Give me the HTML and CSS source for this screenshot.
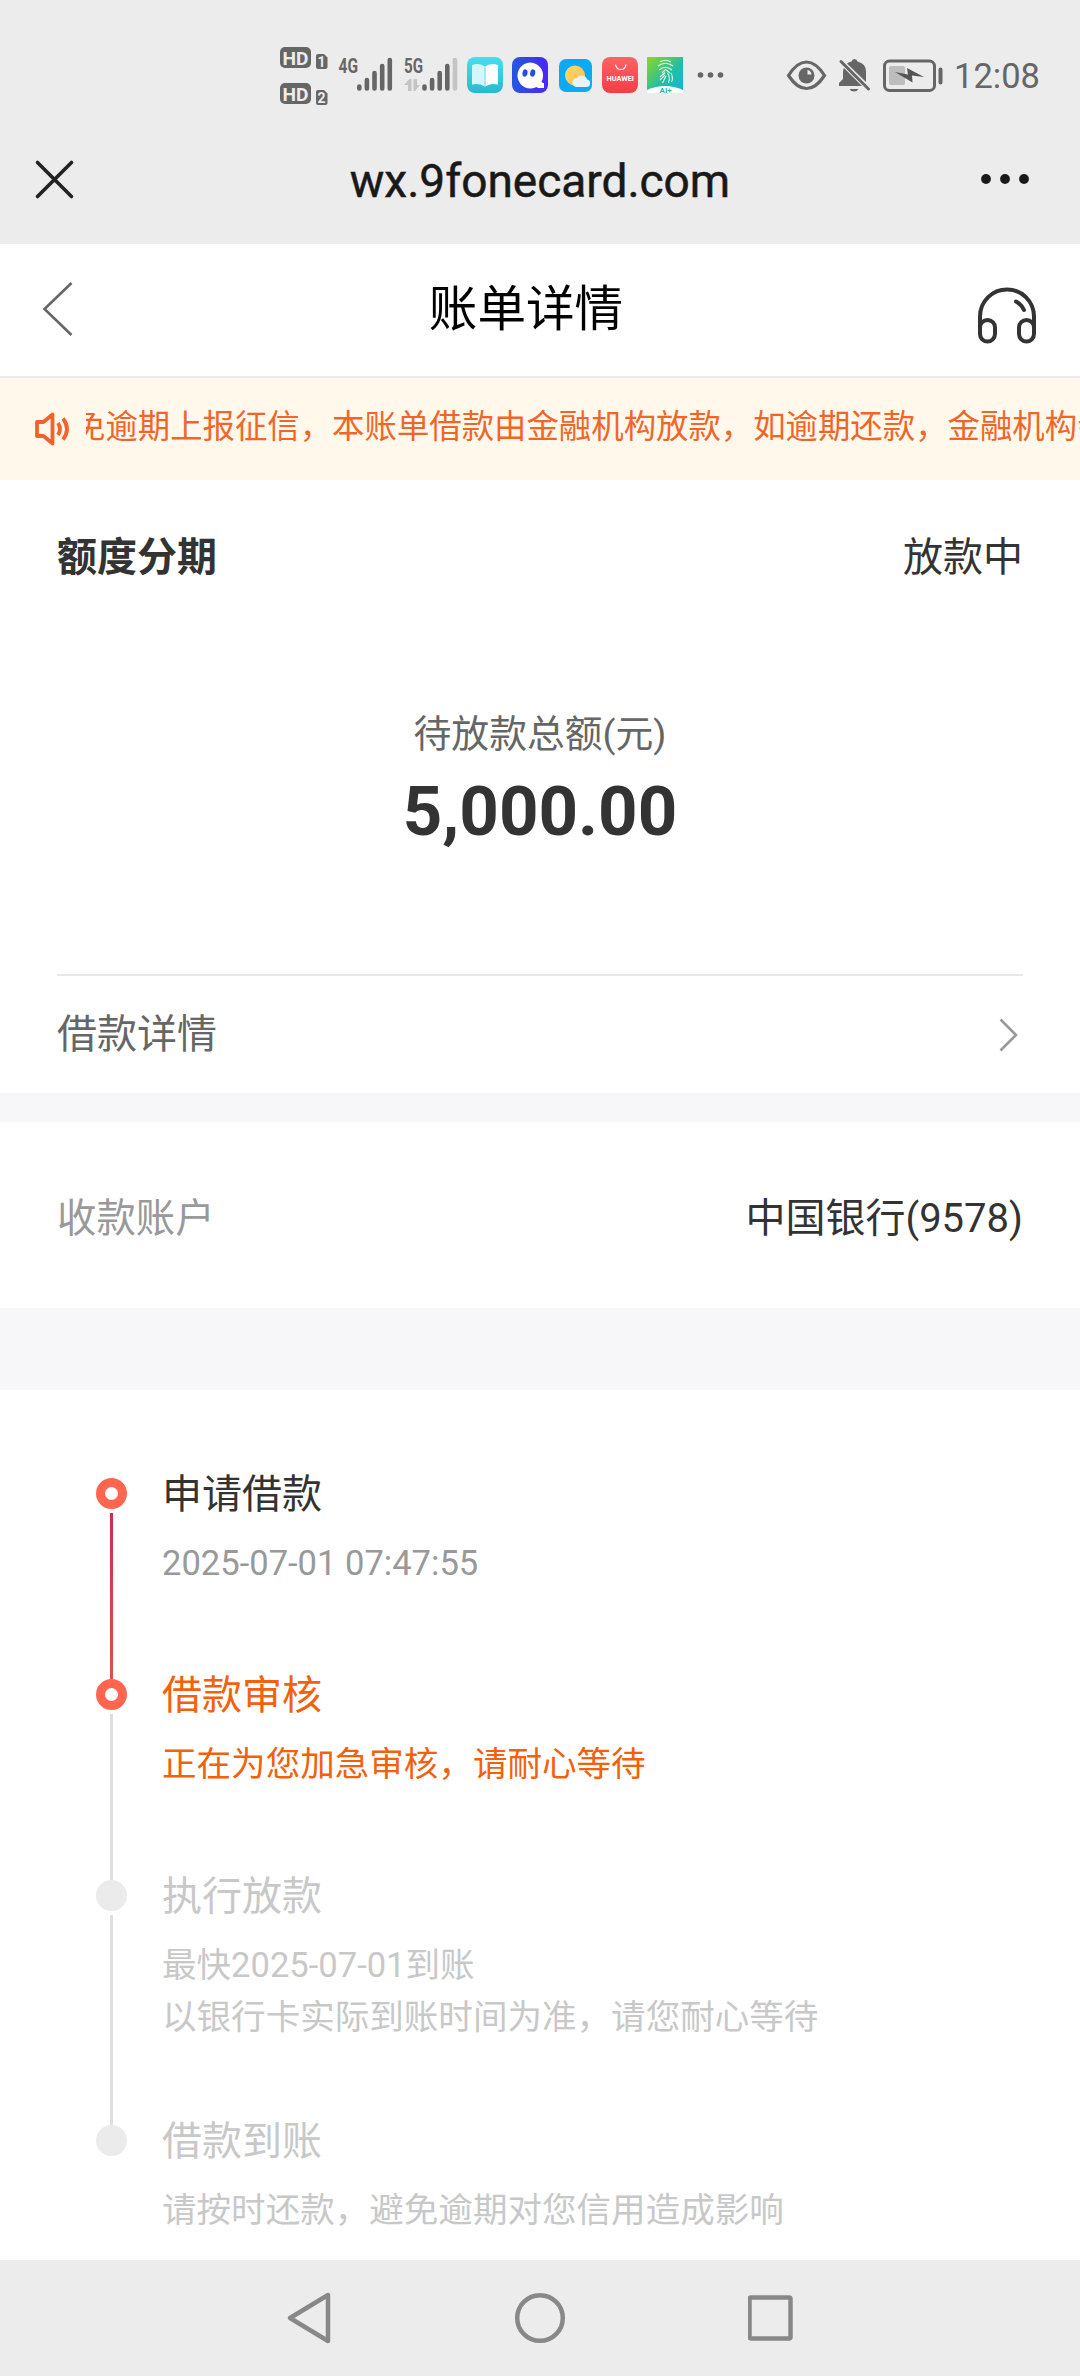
FILE: index.html
```html
<!DOCTYPE html>
<html lang="zh-CN">
<head>
<meta charset="utf-8">
<title>账单详情</title>
<link rel="stylesheet" href="styles.css">
</head>
<body>
<div class="status">
  <svg class="signals" width="180" height="64" viewBox="278 43 180 64">
    <g fill="#666">
      <rect x="280" y="47" width="31" height="21" rx="5"/>
      <rect x="280" y="83" width="31" height="21" rx="5"/>
      <path d="M318 54h6l3.500 3.500V67a2 2 0 0 1-2 2h-7.500a2 2 0 0 1-2-2V56a2 2 0 0 1 2-2z"/>
      <path d="M318 90h6l3.500 3.500V103a2 2 0 0 1-2 2h-7.500a2 2 0 0 1-2-2V92a2 2 0 0 1 2-2z"/>
    </g>
    <g class="tag">
      <text x="282.500" y="64.500" font-size="19" textLength="26" lengthAdjust="spacingAndGlyphs">HD</text>
      <text x="282.500" y="100.500" font-size="19" textLength="26" lengthAdjust="spacingAndGlyphs">HD</text>
      <text x="317.500" y="67" font-size="14">1</text>
      <text x="317.500" y="103" font-size="14">2</text>
    </g>
    <g class="net">
      <text x="338.500" y="73" font-size="21" textLength="19.500" lengthAdjust="spacingAndGlyphs">4G</text>
      <text x="404" y="73" font-size="21" textLength="19" lengthAdjust="spacingAndGlyphs">5G</text>
    </g>
    <g stroke="#666" stroke-width="4.600" stroke-linecap="round">
      <path d="M359.300 86.500v2M366.900 80v8.500M374.500 73v15.500M382.200 66v22.500M389.800 60v28.500"/>
      <path d="M424.500 86.500v2M432.100 80v8.500M439.700 73v15.500M447.300 66v22.500"/>
      <path stroke="#c4c4c4" d="M455 60v28.500"/>
    </g>
    <path d="M404 85l5.500-6h2v12h-3.500v-6zM413.500 79h3.500v6h3l-5 6h-1.500z" fill="#c4c4c4"/>
  </svg>
  <svg class="apps" width="264" height="40" viewBox="465 55 264 40">
    <defs>
      <linearGradient id="book" x2="0" y2="1"><stop stop-color="#43e0f0"/><stop offset="1" stop-color="#2bb8cc"/></linearGradient>
      <linearGradient id="chat" x2="1" y2="0"><stop stop-color="#2457e0"/><stop offset="1" stop-color="#4a26f5"/></linearGradient>
      <linearGradient id="market" x2="0" y2="1"><stop stop-color="#ff6361"/><stop offset="1" stop-color="#f23d49"/></linearGradient>
      <linearGradient id="touch" x2="1" y2="1"><stop stop-color="#8ed91c"/><stop offset=".55" stop-color="#22bfa4"/><stop offset="1" stop-color="#13b4dc"/></linearGradient>
      <linearGradient id="sun" x2="1" y2="1"><stop stop-color="#ffd873"/><stop offset="1" stop-color="#ffbf45"/></linearGradient>
    </defs>
    <rect x="467" y="57" width="36" height="36" rx="8" fill="url(#book)"/>
    <path d="M472 65q7-2.500 12 1v20q-5-3-12-1.500z" fill="#d5f7fb"/>
    <path d="M486 66q5-3.500 12-1v19.500q-7-1.500-12 1.500z" fill="#fff"/>
    <path d="M484 66l2 0v20l-1 1-1-1z" fill="#a9e8f0"/>
    <rect x="512" y="57" width="36" height="36" rx="8" fill="url(#chat)"/>
    <path d="M530 62.500a13 13 0 0 1 11.500 19.200l1.500 1.300h1v5h-6l-1.500-1A13 13 0 1 1 530 62.500z" fill="#fff"/>
    <ellipse cx="525" cy="73" rx="2.500" ry="3.700" transform="rotate(12 525 73)" fill="#274be4"/>
    <ellipse cx="532.700" cy="73" rx="2.500" ry="3.700" transform="rotate(12 532.700 73)" fill="#274be4"/>
    <rect x="559" y="59" width="33" height="33" rx="7" fill="#0aaaf5"/>
    <circle cx="575" cy="75.500" r="10" fill="url(#sun)"/>
    <path d="M577 87a4.500 4.500 0 0 1-.3-9 6 6 0 0 1 10.500 1.500 3.800 3.800 0 0 1-1 7.500z" fill="#e9f2f7"/>
    <rect x="602" y="57" width="36" height="36" rx="8" fill="url(#market)"/>
    <path d="M615.500 64.500q.8 5 5.300 5t5.200-5" fill="none" stroke="#fff" stroke-width="1.200"/>
    <text class="brand" x="606.500" y="80.500" font-size="7" textLength="27.500" lengthAdjust="spacingAndGlyphs">HUAWEI</text>
    <path d="M647 57h36v36h-36z" fill="url(#touch)"/>
    <path d="M647 93v-3q18-8 36 0v3z" fill="#fff"/>
    <text class="ai" x="659.500" y="93" font-size="8">AI+</text>
    <g fill="none" stroke="#e4fae6" stroke-width="1.100">
      <path d="M660 62q5.500-3.500 11 0M658 66q7.500-5.500 15 0M659 70q6.500-5.500 13 0M662 73l3.500-3.500 4.500 3.500M660 77l5-4.500M660 80l5-5M662.500 83l3.500-7M667.500 73q3 4 1 10M671 73q2.500 5 .5 9"/>
    </g>
    <g fill="#666"><circle cx="700.500" cy="75" r="2.800"/><circle cx="710.500" cy="75" r="2.800"/><circle cx="720.500" cy="75" r="2.800"/></g>
  </svg>
  <svg class="state" width="160" height="40" viewBox="785 55 160 40">
    <path d="M788.500 75.500Q797 62 806.500 62t18 13.500Q816 88.500 806.500 88.500t-18-13z" fill="none" stroke="#666" stroke-width="3.200"/>
    <circle cx="806.500" cy="75.500" r="8" fill="#666"/>
    <path d="M807.500 74.500v-4.500a5 5 0 0 1 4 4.500z" fill="#ececec"/>
    <path d="M844 68l18 18h-23v-3l4-4v-7q0-2.500 1-4zM847 63.500q2-1.500 4.500-2 .5-2.500 3-2.500t3 2.500q8.500 2 8.500 10v10.500zM849.500 89h9q-1.500 2.500-4.500 2.500t-4.500-2.500z" fill="#666"/>
    <path d="M841 61.500l27.500 27.500" stroke="#666" stroke-width="3" stroke-linecap="round"/>
    <rect x="884.500" y="61" width="50" height="29.500" rx="5" fill="none" stroke="#666" stroke-width="3"/>
    <rect x="889" y="66" width="16" height="19" rx="2" fill="#bdbdbd"/>
    <path d="M895 72l13 2.500-1-6.500 17 9-12-1.500.5 7z" fill="#555"/>
    <rect x="938.500" y="67.500" width="4" height="17" rx="2" fill="#666"/>
  </svg>
  <span class="clock">12:08</span>
</div>

<div class="bar browser">
  <svg width="41" height="41" viewBox="0 0 41 41"><path d="M3.500 3.500l34 34M37.500 3.500l-34 34" stroke="#222" stroke-width="3.600" stroke-linecap="round"/></svg>
  <span class="domain">wx.9fonecard.com</span>
  <svg width="50" height="12" viewBox="0 0 50 12" fill="#191919"><circle cx="6" cy="6" r="4.900"/><circle cx="25" cy="6" r="4.900"/><circle cx="44" cy="6" r="4.900"/></svg>
</div>

<div class="bar header">
  <svg width="31" height="56" viewBox="0 0 31 56"><path d="M29.500 2L2.500 28l27 26" fill="none" stroke="#666" stroke-width="2.600"/></svg>
  <span class="title">账单详情</span>
  <svg class="headset" width="60" height="58" viewBox="0 0 60 58" fill="none" stroke="#333" stroke-width="4">
    <path d="M3 42V30.500a27 27 0 0 1 54 0V42" />
    <rect x="3" y="34" width="15" height="21.500" rx="7.500"/>
    <rect x="42" y="34" width="15" height="21.500" rx="7.500"/>
    <path d="M39 15.500q5.500 3 8 8.500" stroke-linecap="round"/>
  </svg>
</div>

<div class="notice">
  <svg width="37" height="38" viewBox="0 0 37 38" fill="none" stroke="#f2622a" stroke-width="3.800">
    <path d="M4 12h6.500L19.500 4.500v29L10.500 26H4z" stroke-linejoin="round"/>
    <path d="M25 13q4 6 0 12M30 8.500q8 10.500 0 21"/>
  </svg>
  <div class="marquee"><span>免逾期上报征信，本账单借款由金融机构放款，如逾期还款，金融机构会</span></div>
</div>

<div class="summary">
  <div class="row top"><b>额度分期</b><span>放款中</span></div>
  <div class="amount">
    <div class="caption">待放款总额(元)</div>
    <div class="total">5,000.00</div>
  </div>
  <div class="row detail">
    <span>借款详情</span>
    <svg width="20" height="34" viewBox="0 0 20 34"><path d="M1.500 1.500L17 17 1.500 32.500" fill="none" stroke="#999" stroke-width="2.600"/></svg>
  </div>
</div>

<div class="row account"><span class="label">收款账户</span><span>中国银行(9578)</span></div>

<div class="steps">
  <div class="step done">
    <div class="rail"><i class="dot"></i><i class="line"></i></div>
    <div class="body"><div class="name">申请借款</div><div class="note">2025-07-01 07:47:55</div></div>
  </div>
  <div class="step current">
    <div class="rail"><i class="dot"></i><i class="line"></i></div>
    <div class="body"><div class="name">借款审核</div><div class="note">正在为您加急审核，请耐心等待</div></div>
  </div>
  <div class="step tall">
    <div class="rail"><i class="dot"></i><i class="line"></i></div>
    <div class="body"><div class="name">执行放款</div><div class="note">最快2025-07-01到账<br>以银行卡实际到账时间为准，请您耐心等待</div></div>
  </div>
  <div class="step last">
    <div class="rail"><i class="dot"></i></div>
    <div class="body"><div class="name">借款到账</div><div class="note">请按时还款，避免逾期对您信用造成影响</div></div>
  </div>
</div>

<div class="nav">
  <svg width="46" height="54" viewBox="0 0 46 54"><path d="M42 4v46L4 27z"/></svg>
  <svg width="54" height="54" viewBox="0 0 54 54"><circle cx="27" cy="27" r="22.800"/></svg>
  <svg width="46" height="54" viewBox="0 0 46 54"><rect x="1.500" y="6.500" width="41" height="41" rx="1.500"/></svg>
</div>
</body>
</html>
```
FILE: styles.css
```css
* { box-sizing: border-box; }

body {
  margin: 0;
  width: 1080px;
  height: 2376px;
  overflow: hidden;
  display: flex;
  flex-direction: column;
  background: #f7f7fa;
  color: #333;
  font-family: Roboto, "Noto Sans CJK SC", sans-serif;
  font-size: 40px;
}

body > div { flex: none; }
svg { display: block; flex: none; }

.status {
  display: flex;
  align-items: center;
  height: 118px;
  padding: 32px 0 0 278px;
  background: #ececec;
}
.apps { margin-left: 7px; }
.state { margin-left: 56px; }
.tag { fill: #ececec; font-weight: 700; }
.net { fill: #666; font-weight: 700; }
.brand { fill: #fff; font-weight: 700; }
.ai { fill: #26b5b0; font-weight: 700; }
.clock { padding-top: 2px; margin-left: 9px; font-size: 34.500px; line-height: 40px; color: #666; }

.bar {
  display: grid;
  grid-template-columns: 1fr auto 1fr;
  align-items: center;
}
.bar > :last-child { justify-self: end; }

.browser {
  height: 126px;
  padding: 0 50px 4px 34px;
  background: #ececec;
}
.domain {
  padding-top: 3px;
  margin-left: 16px;
  font-size: 46px;
  line-height: 60px;
  color: #191919;
  -webkit-text-stroke: .5px #191919;
}

.header {
  height: 134px;
  padding: 0 43px 2px 42px;
  background: #fff;
  border-bottom: 2px solid #ebebeb;
}
.title { padding-top: 2px; margin-right: 27px; font-size: 48.600px; line-height: 60px; color: #000; }
.headset { margin-top: 12px; }

.notice {
  display: flex;
  align-items: center;
  height: 102px;
  padding-left: 33px;
  gap: 16px;
  background: #fff8eb;
  color: #f0662a;
  font-size: 32.400px;
}
.marquee { flex: 1; overflow: hidden; display: flex; padding-bottom: 4px; }
.marquee span { white-space: nowrap; margin-left: -13px; line-height: 48px; }

.row { display: flex; align-items: center; justify-content: space-between; }

.summary { height: 613px; padding: 0 57px; background: #fff; }
.top { height: 147px; }
.amount { height: 347px; padding-top: 79px; text-align: center; }
.caption { font-size: 37.800px; line-height: 56px; color: #666; }
.total { font-size: 69px; line-height: 100px; font-weight: 700; }
.detail { height: 118px; padding-right: 4px; border-top: 2px solid #e8e8e8; color: #666; }
.detail span { padding-bottom: 7px; }
.detail svg { margin-top: 1px; }

.account { height: 186px; margin-top: 29px; padding: 0 57px; background: #fff; }
.label { padding-bottom: 1px; color: #999; font-size: 39.400px; }

.steps { margin-top: 82px; height: 870px; padding: 88px 0 0 96px; background: #fff; overflow: hidden; }
.step { display: flex; gap: 35px; height: 201px; color: #c8c8c8; }
.step.tall { height: 245px; }
.rail { display: flex; flex-direction: column; align-items: center; width: 31px; height: 100%; }
.dot { flex: none; width: 31px; height: 31px; border-radius: 50%; background: #ebebeb; }
.line { flex: 1; width: 3px; margin-top: 4px; background: #dedede; }
.done .dot, .current .dot { border: 9.500px solid #ff6650; background: #fff; }
.done .line { background: linear-gradient(#cf2c50, #de504c); }
.name { height: 46px; margin-top: -6px; line-height: 46px; }
.note { margin-top: 19px; line-height: 52px; font-size: 34.560px; }
.done .name { color: #333; }
.done .note { color: #999; }
.current .body { color: #f2610c; }

.nav {
  display: flex;
  align-items: center;
  justify-content: space-between;
  height: 116px;
  padding: 0 286px;
  background: #ececec;
  fill: none;
  stroke: #888;
  stroke-width: 4.500px;
}
.nav svg { stroke-linejoin: round; }
```
